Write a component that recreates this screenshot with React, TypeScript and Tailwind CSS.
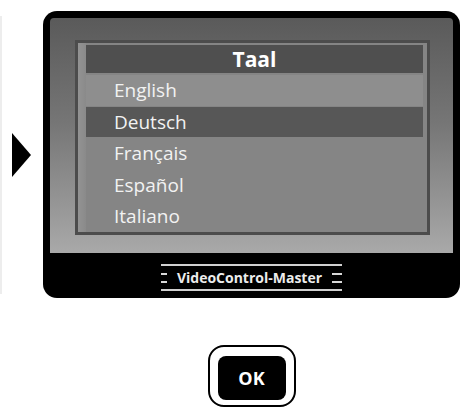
const font = "font-['Open_Sans','Noto_Sans',sans-serif]";

const languages = [
  { label: "English", bg: "bg-[#8e8e8e]", h: "h-[31px]", mt: "mt-[2px]" },
  { label: "Deutsch", bg: "bg-[#575757]", h: "h-[30px]", mt: "mt-[1px]" },
  { label: "Français", bg: "", h: "h-[32px]", mt: "" },
  { label: "Español", bg: "", h: "h-[32px]", mt: "" },
  { label: "Italiano", bg: "", h: "h-[30px]", mt: "" },
];

function Dashes({ w }: { w: string }) {
  return (
    <div className="flex flex-col gap-[6px]">
      <span className={`block h-[2px] ${w} bg-[#d8d8d8]`} />
      <span className={`block h-[2px] ${w} bg-[#d8d8d8]`} />
    </div>
  );
}

export default function App() {
  return (
    <div className={`w-[464px] h-[412px] bg-white ${font} overflow-hidden`}>
      <div className="flex items-center pt-[11px]">
        {/* faint page edge */}
        <div className="w-[2px] h-[278px] bg-[#ededed]" />
        <div className="ml-[10px] w-[31px]">
          <svg width="20" height="44" viewBox="0 0 20 44">
            <polygon points="0,0 19,22 0,44" fill="#000" />
          </svg>
        </div>

        {/* device */}
        <div className="w-[417px] h-[287px] rounded-[14px] bg-black px-[7px] pt-[7px] flex flex-col">
          <div className="h-[235px] rounded-t-[4px] bg-[linear-gradient(180deg,#5a5a5a_0%,#767676_45%,#a9a9a9_100%)] pt-[22px] pl-[25px] pr-[23px] pb-[18px]">
            <div className="h-full border-[3px] border-[#4c4c4c] bg-[linear-gradient(90deg,#939393_0px,#8a8a8a_8px,#858585_8px)] pl-[8px] pr-[4px] pt-[2px]">
              <div className="h-[28px] bg-[#4f4f4f] flex items-center justify-center text-white font-bold text-[21px] leading-none">
                Taal
              </div>
              {languages.map((l) => (
                <div
                  key={l.label}
                  className={`${l.h} ${l.mt} ${l.bg} flex items-center pl-[28px] text-[19px] leading-none text-[#f2f2f2]`}
                >
                  {l.label}
                </div>
              ))}
            </div>
          </div>
          <div className="flex-1 flex items-center justify-center pt-[4px]">
            <div className="w-[181px] border-y-2 border-[#d0d0d0] h-[27px] flex items-center justify-between">
              <Dashes w="w-[6px]" />
              <span className="text-[14px] font-bold text-[#ececec] leading-none">VideoControl-Master</span>
              <Dashes w="w-[10px]" />
            </div>
          </div>
        </div>
      </div>

      {/* OK button */}
      <div className="pl-[43px] w-[460px] flex justify-center mt-[47px]">
        <div className="border-2 border-black rounded-[16px] px-[8px] pt-[9px] pb-[5px] bg-white">
          <div className="w-[68px] h-[44px] bg-black rounded-[8px] flex items-center justify-center text-white font-bold text-[18px]">
            OK
          </div>
        </div>
      </div>
    </div>
  );
}
